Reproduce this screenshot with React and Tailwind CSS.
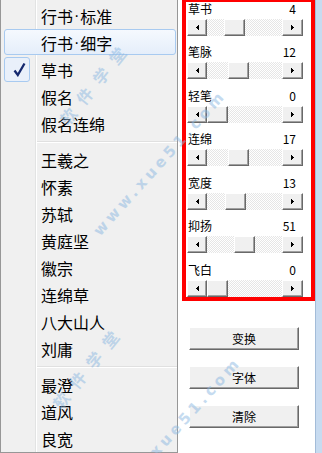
import React from 'react';

const cjk = "font-['Noto_Sans_CJK_SC','Noto_Sans',sans-serif]";
const raised =
  'bg-[#f0f0f0] border border-t-white border-l-white border-r-[#696969] border-b-[#696969] shadow-[inset_-1px_-1px_0_#a0a0a0]';

const menu = [
  { t: ['行书', '标准'] },
  { t: ['行书', '细字'], hover: true },
  { t: '草书', checked: true },
  { t: '假名' },
  { t: '假名连绵' },
  { sep: true },
  { t: '王羲之' },
  { t: '怀素' },
  { t: '苏轼' },
  { t: '黄庭坚' },
  { t: '徽宗' },
  { t: '连绵草' },
  { t: '八大山人' },
  { t: '刘庸' },
  { sep: true },
  { t: '最澄' },
  { t: '道风' },
  { t: '良宽' },
];

// pos = thumb offset inside the track, measured off the screenshot
const sliders = [
  { name: '草书', val: 4, pos: 17, h: 'h-[43px]' },
  { name: '笔脉', val: 12, pos: 21, h: 'h-[44px]' },
  { name: '轻笔', val: 0, pos: 0, h: 'h-[43px]' },
  { name: '连绵', val: 17, pos: 21, h: 'h-[44px]' },
  { name: '宽度', val: 13, pos: 18, h: 'h-[43px]' },
  { name: '抑扬', val: 51, pos: 27, h: 'h-[44px]' },
  { name: '飞白', val: 0, pos: 0, h: 'h-[34px]' },
];

function Arrow({ dir }) {
  const d =
    dir === 'left'
      ? 'M2 0h1v5h-1z M1 1h1v3h-1z M0 2h1v1h-1z'
      : 'M0 0h1v5h-1z M1 1h1v3h-1z M2 2h1v1h-1z';
  return (
    <svg width="3" height="5" viewBox="0 0 3 5" shapeRendering="crispEdges">
      <path d={d} fill="#000" />
    </svg>
  );
}

function Check() {
  return (
    <svg width="13" height="15" viewBox="0 0 13 15">
      <path d="M1.5 8.5 L4.8 13 L11.5 1.5" fill="none" stroke="#14286e" strokeWidth="2.3" strokeLinejoin="miter" />
    </svg>
  );
}

function Label({ t }) {
  if (!Array.isArray(t)) return t;
  // the middle dot is narrow in the original font
  return (
    <>
      {t[0]}
      <span className="font-['Liberation_Sans',sans-serif] mx-[1px]">·</span>
      {t[1]}
    </>
  );
}

function MenuRow({ item }) {
  if (item.sep) {
    return (
      <div className="flex h-[9px]">
        <div className="w-[35px] h-full border-r border-[#e2e3e3]" />
        <div className="flex-1 h-full border-l border-white pt-[4px]">
          <div className="h-[1px] bg-[#e0e0e0]" />
          <div className="h-[1px] bg-white" />
        </div>
      </div>
    );
  }
  return (
    <div className="relative flex h-[27px]">
      <div className="w-[35px] h-full border-r border-[#e2e3e3]" />
      <div className="flex-1 h-full border-l border-white" />
      {item.hover && (
        <div className="absolute left-[3px] right-[1px] top-0 h-[26px] rounded-[3px] border border-[#a8caf0] bg-linear-to-b from-[#f5f9fe] to-[#e5eefa]" />
      )}
      {item.checked && (
        <div className="absolute left-[3px] top-[1px] w-[26px] h-[25px] rounded-[3px] border border-[#a8caf0] bg-[#e9f0fa] flex items-center justify-center pl-[4px]">
          <Check />
        </div>
      )}
      <div className={`absolute left-[40px] top-0 h-full flex items-center text-[16px] text-black ${cjk}`}>
        <Label t={item.t} />
      </div>
    </div>
  );
}

function ScrollBar({ pos }) {
  return (
    <div className="mt-[3px] flex w-[116px] h-[17px]">
      <div className={`w-[20px] h-full flex items-center justify-center pb-[1px] ${raised}`}>
        <Arrow dir="left" />
      </div>
      <div className="flex-1 h-full flex bg-[repeating-conic-gradient(#ffffff_0_25%,#e6e6e6_0_50%)] bg-[length:2px_2px]">
        <div className={`w-[21px] h-full ${raised}`} style={{ marginLeft: pos }} />
      </div>
      <div className={`w-[21px] h-full flex items-center justify-center pb-[1px] ${raised}`}>
        <Arrow dir="right" />
      </div>
    </div>
  );
}

function Watermark() {
  const wm = "absolute -translate-x-1/2 -translate-y-1/2 whitespace-nowrap font-bold text-[#8cb8e2] opacity-50 font-['DejaVu_Sans','Noto_Sans_CJK_SC',sans-serif]";
  return (
    <div className="pointer-events-none absolute inset-0">
      <span className={`${wm} left-[97px] top-[83px] -rotate-[51deg] text-[16px] tracking-[10px]`}>软件学堂</span>
      <span className={`${wm} left-[160px] top-[163px] -rotate-[48deg] text-[15px] tracking-[4px]`}>www.xue51.com</span>
      <span className={`${wm} left-[90px] top-[367px] -rotate-[51deg] text-[16px] tracking-[10px]`}>软件学堂</span>
      <span className={`${wm} left-[175px] top-[430px] -rotate-[48deg] text-[15px] tracking-[4px]`}>www.xue51.com</span>
    </div>
  );
}

export default function App() {
  return (
    <div className="relative flex w-[322px] h-[453px] overflow-hidden bg-white">
      {/* context menu */}
      <div className="w-[178px] h-full flex flex-col border-l border-r border-b border-[#979797] bg-[#f0f0f0]">
        <div className="flex h-[2px]">
          <div className="w-[35px] h-full border-r border-[#e2e3e3]" />
          <div className="flex-1 h-full border-l border-white" />
        </div>
        {menu.map((item, i) => (
          <MenuRow key={i} item={item} />
        ))}
      </div>

      {/* parameter panel */}
      <div className="flex-1 h-full flex flex-col">
        <div className="ml-[4px] w-[133px] h-[301px] border-4 border-t-2 border-[#ff0000] pl-[1px] flex flex-col">
          {sliders.map(s => (
            <div key={s.name} className={`${s.h} flex flex-col`}>
              <div className={`flex w-[116px] h-[14px] items-center justify-between pl-[1px] pr-[7px] text-[12px] leading-[14px] text-black ${cjk}`}>
                <span>{s.name}</span>
                <span>{s.val}</span>
              </div>
              <ScrollBar pos={s.pos} />
            </div>
          ))}
        </div>

        <div className="ml-[11px] mt-[26px] flex flex-col gap-[16px]">
          {['变换', '字体', '清除'].map(b => (
            <div key={b} className={`w-[110px] h-[23px] flex items-center justify-center text-[12px] text-black ${cjk} ${raised}`}>
              {b}
            </div>
          ))}
        </div>
      </div>

      {/* window frame edge */}
      <div className="w-[7px] h-full border-l border-[#a3bcd8] bg-[#c7dbf0]" />

      <Watermark />
    </div>
  );
}
